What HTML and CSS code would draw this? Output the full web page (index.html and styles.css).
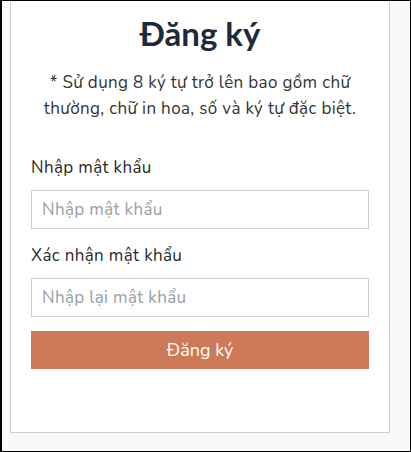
FILE: index.html
```html
<!DOCTYPE html>
<html lang="vi">
<head>
    <meta charset="UTF-8">
    <meta name="viewport" content="width=device-width, initial-scale=1.0">
    <title>Đăng ký</title>
    <link rel="stylesheet" href="styles.css">
</head>
<body>
    <div class="screen">
        <div class="register-card">
            <h1>Đăng ký</h1>
            <p class="hint">* Sử dụng 8 ký tự trở lên bao gồm chữ thường, chữ in hoa, số và ký tự đặc biệt.</p>
            <form id="registerForm">
                <label for="password">Nhập mật khẩu</label>
                <input type="password" id="password" placeholder="Nhập mật khẩu" />
                <label for="confirm">Xác nhận mật khẩu</label>
                <input type="password" id="confirm" placeholder="Nhập lại mật khẩu" />
                <button type="submit">Đăng ký</button>
            </form>
        </div>
    </div>
</body>
</html>
```

FILE: styles.css
```css
* {
    box-sizing: border-box;
}
body {
    margin: 0;
    font-family: "Nunito", Lato, "Liberation Sans", sans-serif;
}
.screen {
    width: 411px;
    height: 452px;
    border: 1px solid #000;
    border-left-width: 2px;
    background-color: #f9f9f9;
    padding-left: 8px;
}
.register-card {
    width: 380px;
    background: #fff;
    border: 1px solid #cccccc;
    border-top: none;
    padding: 12px 20px 63px;
}
.register-card h1 {
    margin: 0;
    font-family: Lato, sans-serif;
    font-weight: 700;
    font-size: 33px;
    line-height: 40px;
    color: #1d2b3b;
    text-align: center;
}
.hint {
    margin: 17px 0 33px;
    font-size: 17px;
    line-height: 26px;
    letter-spacing: 0.35px;
    color: #333;
    text-align: center;
}
#registerForm label {
    display: block;
    font-size: 17px;
    line-height: 26px;
    letter-spacing: 0.35px;
    color: #2a2a2a;
    margin-bottom: 9px;
}
#registerForm input {
    display: block;
    width: 100%;
    height: 39px;
    padding: 0 10px;
    border: 1px solid #ccd1d5;
    font-family: inherit;
    font-size: 17px;
    letter-spacing: 0.35px;
    color: #333;
    margin-bottom: 14px;
}
#registerForm input::placeholder {
    color: #999ea3;
}
#registerForm button {
    display: block;
    width: 100%;
    height: 38px;
    background: #cd7a58;
    color: #fff;
    border: none;
    font-family: inherit;
    font-size: 18px;
    cursor: pointer;
}
```
